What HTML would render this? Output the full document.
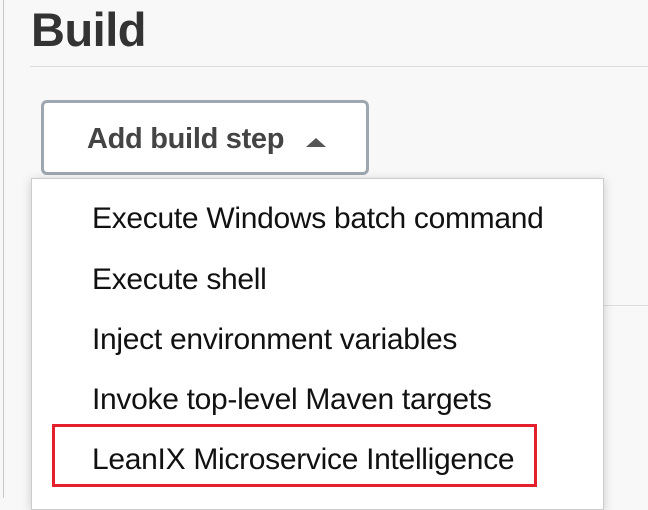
<!DOCTYPE html>
<html><head><style>
html,body{margin:0;padding:0}
body{width:648px;height:498px;overflow:hidden;background:#f8f8f8;position:relative;font-family:"Liberation Sans",sans-serif;}
.lb{position:absolute;left:3px;top:0;width:1px;height:498px;background:#c8c8c8}
h1{position:absolute;left:31px;top:2px;margin:0;font-size:47px;font-weight:bold;color:#333;letter-spacing:-0.5px}
.rule{position:absolute;left:30px;right:0;top:66px;height:1px;background:#ddd}
.rule2{position:absolute;left:603px;right:0;top:305px;height:1px;background:#ddd}
.btn{position:absolute;left:41px;top:100px;width:322px;height:69px;border:3px solid #9ea7b0;border-radius:6px;background:#fff}
.btn span{position:absolute;left:43px;top:20px;font-size:29px;font-weight:bold;color:#444;letter-spacing:-0.3px}
.tri{position:absolute;left:262px;top:35px;width:0;height:0;border-left:10px solid transparent;border-right:10px solid transparent;border-bottom:9px solid #555}
.dd{position:absolute;left:31px;top:178px;width:571px;height:330px;background:#fff;border:1px solid #ccc;box-shadow:0 2px 10px rgba(0,0,0,.18)}
.it{position:absolute;left:60px;font-size:30px;color:#111;white-space:nowrap;letter-spacing:-0.3px}
.red{position:absolute;left:52px;top:424px;width:479px;height:57px;border:3px solid #e3202b}
</style></head><body>
<div class="lb"></div>
<h1>Build</h1>
<div class="rule"></div>
<div class="rule2"></div>
<div class="btn"><span>Add build step</span><div class="tri"></div></div>
<div class="dd">
<div class="it" style="top:23px">Execute Windows batch command</div>
<div class="it" style="top:84px">Execute shell</div>
<div class="it" style="top:144px">Inject environment variables</div>
<div class="it" style="top:204px">Invoke top-level Maven targets</div>
<div class="it" style="top:264px">LeanIX Microservice Intelligence</div>
</div>
<div class="red"></div>
</body></html>
